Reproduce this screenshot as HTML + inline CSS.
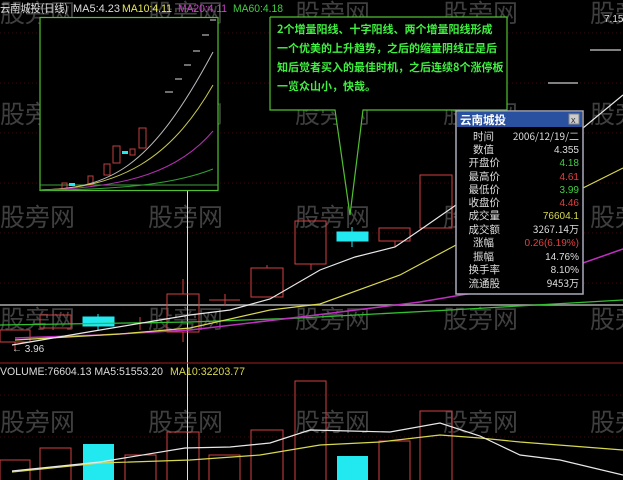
<!DOCTYPE html>
<html><head><meta charset="utf-8"><style>
html,body{margin:0;padding:0;background:#000;width:623px;height:480px;overflow:hidden}
svg{display:block}
text{font-family:"Liberation Sans","Noto Sans CJK SC",sans-serif}
.cj{font-family:"Noto Sans CJK SC","WenQuanYi Zen Hei",sans-serif}
</style></head><body>
<svg width="623" height="480" viewBox="0 0 623 480" xmlns="http://www.w3.org/2000/svg">
<rect width="623" height="480" fill="#000"/>
<g stroke="#3a0a0a" stroke-dasharray="1,3" stroke-width="1">
<line x1="0" y1="33" x2="623" y2="33"/><line x1="0" y1="83" x2="623" y2="83"/>
<line x1="0" y1="133" x2="623" y2="133"/><line x1="0" y1="183" x2="623" y2="183"/>
<line x1="0" y1="233" x2="623" y2="233"/><line x1="0" y1="283" x2="623" y2="283"/>
<line x1="0" y1="395" x2="623" y2="395"/><line x1="0" y1="437" x2="623" y2="437"/>
</g>
<g class="cj" fill="#5a5a5a" font-size="25" opacity="0.7">
<text x="0" y="22" class="cj">股旁网</text><text x="148" y="22" class="cj">股旁网</text><text x="295" y="22" class="cj">股旁网</text><text x="443" y="22" class="cj">股旁网</text><text x="590" y="22" class="cj">股旁网</text>
<text x="0" y="123" class="cj">股旁网</text><text x="148" y="123" class="cj">股旁网</text><text x="295" y="123" class="cj">股旁网</text><text x="443" y="123" class="cj">股旁网</text><text x="590" y="123" class="cj">股旁网</text>
<text x="0" y="226" class="cj">股旁网</text><text x="148" y="226" class="cj">股旁网</text><text x="295" y="226" class="cj">股旁网</text><text x="443" y="226" class="cj">股旁网</text><text x="590" y="226" class="cj">股旁网</text>
<text x="0" y="328" class="cj">股旁网</text><text x="148" y="328" class="cj">股旁网</text><text x="295" y="328" class="cj">股旁网</text><text x="443" y="328" class="cj">股旁网</text><text x="590" y="328" class="cj">股旁网</text>
<text x="0" y="431" class="cj">股旁网</text><text x="148" y="431" class="cj">股旁网</text><text x="295" y="431" class="cj">股旁网</text><text x="443" y="431" class="cj">股旁网</text><text x="590" y="431" class="cj">股旁网</text>
</g>
<text x="0" y="12" font-size="11" fill="#ddd" class="cj" textLength="68" lengthAdjust="spacingAndGlyphs">云南城投(日线)</text>
<text x="73" y="12" font-size="11" fill="#ddd" textLength="47" lengthAdjust="spacingAndGlyphs">MA5:4.23</text>
<text x="122" y="12" font-size="11" fill="#e8e85a" textLength="50" lengthAdjust="spacingAndGlyphs">MA10:4.11</text>
<text x="178" y="12" font-size="11" fill="#d040d0" textLength="49" lengthAdjust="spacingAndGlyphs">MA20:4.11</text>
<text x="233" y="12" font-size="11" fill="#40d040" textLength="50" lengthAdjust="spacingAndGlyphs">MA60:4.18</text>
<text x="604" y="22" font-size="10" fill="#ddd">7.15</text>
<line x1="590" y1="50" x2="621" y2="50" stroke="#fff"/>
<line x1="548" y1="83" x2="578" y2="83" stroke="#fff"/>
<line x1="187.5" y1="17" x2="187.5" y2="480" stroke="#ddd"/>
<line x1="0" y1="305" x2="623" y2="305" stroke="#aaa" stroke-width="1.5"/>
<line x1="0" y1="363" x2="623" y2="363" stroke="#a02020"/>
<g fill="none" stroke="#d04040">
<rect x="0" y="330" width="30" height="12"/><line x1="15" y1="342" x2="15" y2="350"/>
<rect x="40" y="315" width="31" height="13"/>
<line x1="125" y1="323" x2="156" y2="323"/><line x1="140" y1="317" x2="140" y2="330"/>
<rect x="167" y="294" width="32" height="38"/><line x1="183" y1="279" x2="183" y2="294"/><line x1="183" y1="332" x2="183" y2="342"/>
<line x1="209" y1="300" x2="240" y2="300"/><line x1="225" y1="294" x2="225" y2="306"/>
<rect x="251" y="268" width="32" height="29"/><line x1="267" y1="265" x2="267" y2="268"/>
<rect x="295" y="221" width="31" height="43"/><line x1="311" y1="264" x2="311" y2="270"/>
<rect x="379" y="228" width="31" height="13"/><line x1="395" y1="241" x2="395" y2="247"/>
<rect x="420" y="175" width="32" height="53"/>
</g>
<g fill="#22e8f0" stroke="#22e8f0">
<rect x="83" y="317" width="31" height="9"/><line x1="98" y1="314" x2="98" y2="330"/>
<rect x="337" y="232" width="31" height="9"/><line x1="352" y1="227" x2="352" y2="247"/>
</g>
<polyline fill="none" stroke="#30c030" stroke-width="1.3" points="0,325 190,322 300,318 450,310 623,300"/>
<polyline fill="none" stroke="#c030c0" stroke-width="1.5" points="15,338 100,335 190,330 300,317 420,302 520,285 623,249"/>
<polyline fill="none" stroke="#d8d850" stroke-width="1.2" points="15,340 120,334 190,328 270,310 320,304 400,275 456,245 520,220 583,188 623,168"/>
<polyline fill="none" stroke="#e8e8e8" stroke-width="1.2" points="12,345 100,330 190,315 230,310 270,299 320,270 355,257 395,247 420,230 456,205 520,170 583,128 623,95"/>
<text x="12" y="352" font-size="10" fill="#ddd">← 3.96</text>
<rect x="40" y="17.5" width="178" height="173" fill="#000" stroke="#50c030" stroke-width="1.2"/>
<line x1="40" y1="185" x2="218" y2="185" stroke="#40a040"/>
<g fill="none" stroke="#c04040">
<rect x="62" y="183" width="5" height="6"/><rect x="88" y="176" width="5" height="9"/><rect x="104" y="164" width="6" height="11"/><rect x="113" y="146" width="7" height="17"/><rect x="130" y="149" width="5" height="6"/><rect x="139" y="128" width="7" height="20"/>
</g>
<rect x="69" y="183" width="6" height="3" fill="#22e8f0"/><rect x="122" y="151" width="6" height="3" fill="#22e8f0"/>
<g stroke="#ddd"><line x1="165" y1="92" x2="173" y2="92"/><line x1="175" y1="79" x2="182" y2="79"/><line x1="184" y1="65" x2="191" y2="65"/><line x1="193" y1="51" x2="200" y2="51"/><line x1="202" y1="35" x2="209" y2="35"/><line x1="210" y1="20" x2="216" y2="20"/></g>
<path d="M40,190 C110,188 150,170 213,52" fill="none" stroke="#bbb"/>
<path d="M40,190 C120,188 170,160 213,85" fill="none" stroke="#c8c850"/>
<path d="M40,190 C130,188 180,170 213,131" fill="none" stroke="#b030b0"/>
<path d="M40,190 C130,190 180,182 213,169" fill="none" stroke="#30a030"/>
<polyline fill="#000" stroke="#50c030" stroke-width="1.2" points="270,17 507,17 507,110 363,110 350,215 335,110 270,110 270,17"/>
<g class="cj" fill="#40f040" font-size="11" font-weight="bold">
<text x="277" y="33" class="cj">2个增量阳线、十字阳线、两个增量阳线形成</text>
<text x="277" y="52" class="cj">一个优美的上升趋势，之后的缩量阴线正是后</text>
<text x="277" y="71" class="cj">知后觉者买入的最佳时机，之后连续8个涨停板</text>
<text x="277" y="90" class="cj">一览众山小，快哉。</text>
</g>
<rect x="456" y="111" width="127" height="183" fill="#000" stroke="#aab" stroke-width="1.5"/>
<rect x="457" y="112" width="125" height="15" fill="#2a50a0"/>
<text x="460" y="124" font-size="11.5" fill="#fff" class="cj" font-weight="bold">云南城投</text>
<rect x="569" y="114" width="10" height="10" fill="#ccc" stroke="#888"/><text x="571" y="123" font-size="9" fill="#333">x</text>
<g font-size="10.5" class="cj" fill="#ddd" text-anchor="end">
<text x="494" y="140" class="cj">时间</text><text x="494" y="153" class="cj">数值</text><text x="500" y="166" class="cj">开盘价</text><text x="500" y="180" class="cj">最高价</text><text x="500" y="193" class="cj">最低价</text><text x="500" y="206" class="cj">收盘价</text><text x="500" y="219" class="cj">成交量</text><text x="500" y="233" class="cj">成交额</text><text x="494" y="246" class="cj">涨幅</text><text x="494" y="260" class="cj">振幅</text><text x="500" y="273" class="cj">换手率</text><text x="500" y="287" class="cj">流通股</text>
</g>
<g font-size="10" text-anchor="end" class="cj">
<text x="579" y="140" fill="#ddd" class="cj">2006/12/19/二</text>
<text x="579" y="153" fill="#ddd">4.355</text>
<text x="579" y="166" fill="#40d040">4.18</text>
<text x="579" y="180" fill="#e04040">4.61</text>
<text x="579" y="193" fill="#40d040">3.99</text>
<text x="579" y="206" fill="#e04040">4.46</text>
<text x="579" y="219" fill="#d8d850">76604.1</text>
<text x="579" y="233" fill="#ddd" class="cj">3267.14万</text>
<text x="579" y="246" fill="#e04040">0.26(6.19%)</text>
<text x="579" y="260" fill="#ddd">14.76%</text>
<text x="579" y="273" fill="#ddd">8.10%</text>
<text x="579" y="287" fill="#ddd" class="cj">9453万</text>
</g>
<text x="0" y="375" font-size="11" fill="#ddd" textLength="163" lengthAdjust="spacingAndGlyphs">VOLUME:76604.13 MA5:51553.20</text>
<text x="170" y="375" font-size="11" fill="#d8d850" textLength="75" lengthAdjust="spacingAndGlyphs">MA10:32203.77</text>
<g fill="none" stroke="#d04040">
<rect x="0" y="460" width="30" height="25"/><rect x="40" y="448" width="31" height="40"/><rect x="125" y="455" width="31" height="30"/>
<rect x="167" y="432" width="32" height="55"/><rect x="209" y="455" width="31" height="30"/><rect x="251" y="430" width="32" height="55"/>
<rect x="295" y="381" width="31" height="105"/><rect x="379" y="441" width="31" height="45"/><rect x="420" y="411" width="32" height="75"/>
</g>
<rect x="83" y="444" width="31" height="40" fill="#22e8f0"/>
<rect x="337" y="456" width="31" height="30" fill="#22e8f0"/>
<polyline fill="none" stroke="#d8d850" stroke-width="1.2" points="12,472 100,463 190,460 260,455 320,445 380,442 440,435 480,438 520,442 623,450"/>
<polyline fill="none" stroke="#e8e8e8" stroke-width="1.2" points="12,471 100,462 185,448 230,447 270,443 310,430 350,431 390,432 440,423 480,436 520,455 560,460 623,475"/>
</svg>
</body></html>
